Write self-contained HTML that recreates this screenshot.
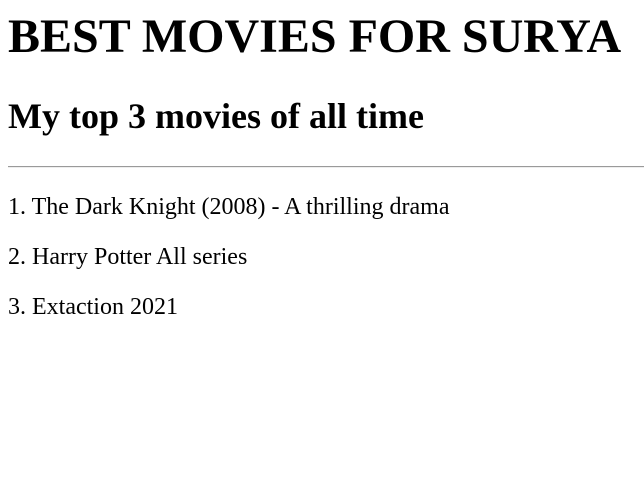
<!DOCTYPE html>
<html><head><style>
body{margin:0;background:#fff;font-family:"Liberation Serif","Times New Roman",Times,serif;color:#000;}
div{position:absolute;left:8px;line-height:1;white-space:nowrap;}
.h1{font-size:48px;font-weight:bold;top:13px;}
.h2{font-size:36px;font-weight:bold;top:98px;}
.p{font-size:24px;}
.hr{top:166px;width:636px;height:0;border-top:1px solid #9a9a9a;border-bottom:1px solid #eee;}
</style></head><body>
<div class="h1">BEST MOVIES FOR SURYA</div>
<div class="h2">My top 3 movies of all time</div>
<div class="hr"></div>
<div class="p" style="top:195px">1. The Dark Knight (2008) - A thrilling drama</div>
<div class="p" style="top:245px">2. Harry Potter All series</div>
<div class="p" style="top:295px">3. Extaction 2021</div>
</body></html>
